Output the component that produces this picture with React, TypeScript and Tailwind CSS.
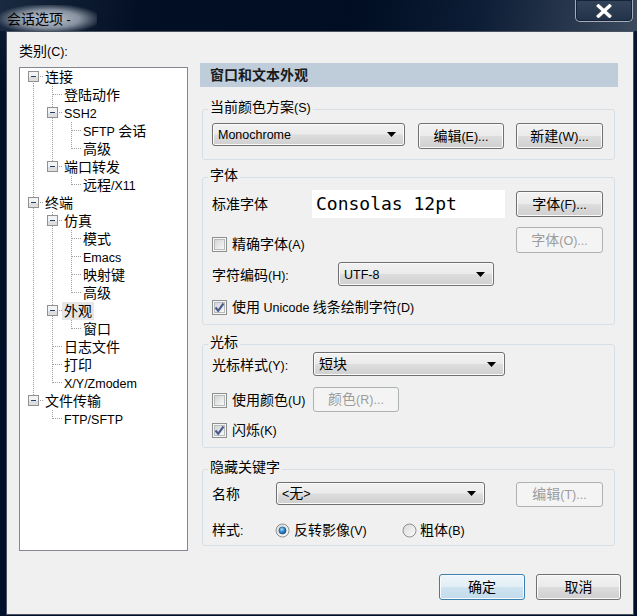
import React from 'react';

// split mixed text so CJK and Latin runs get their own sizes (Windows UI font mix)
const CJK_RUN = /([\u2E80-\u9FFF\uFF00-\uFFEF]+)/;
const IS_CJK = /[\u2E80-\u9FFF\uFF00-\uFFEF]/;

const T: React.FC<{ s: string }> = ({ s }) => (
  <span className="whitespace-nowrap">
    {s
      .split(CJK_RUN)
      .filter(Boolean)
      .map((p, i) => (
        <span key={i} className={IS_CJK.test(p) ? 'text-[14px]' : 'text-[12.5px]'}>
          {p}
        </span>
      ))}
  </span>
);

type Node = { l: number; t: string; exp?: boolean; sel?: boolean };

const tree: Node[] = [
  { l: 0, t: '连接', exp: true },
  { l: 1, t: '登陆动作' },
  { l: 1, t: 'SSH2', exp: true },
  { l: 2, t: 'SFTP 会话' },
  { l: 2, t: '高级' },
  { l: 1, t: '端口转发', exp: true },
  { l: 2, t: '远程/X11' },
  { l: 0, t: '终端', exp: true },
  { l: 1, t: '仿真', exp: true },
  { l: 2, t: '模式' },
  { l: 2, t: 'Emacs' },
  { l: 2, t: '映射键' },
  { l: 2, t: '高级' },
  { l: 1, t: '外观', exp: true, sel: true },
  { l: 2, t: '窗口' },
  { l: 1, t: '日志文件' },
  { l: 1, t: '打印' },
  { l: 1, t: 'X/Y/Zmodem' },
  { l: 0, t: '文件传输', exp: true },
  { l: 1, t: 'FTP/SFTP' },
];

// does the node at level k (self or ancestor of row i) have a later sibling?
const hasNext = (i: number, k: number) => {
  for (let j = i + 1; j < tree.length; j++) {
    if (tree[j].l < k) return false;
    if (tree[j].l === k) return true;
  }
  return false;
};

const TreeRow: React.FC<{ i: number }> = ({ i }) => {
  const n = tree[i];
  const L = n.l;
  const x = 19 * L + 9.5;
  const top = i === 0 ? 8.5 : 0;
  const bottom = hasNext(i, L) ? 18 : 8.5;
  return (
    <div className="flex h-[18px] items-center">
      <svg width={19 * (L + 1)} height={18} className="shrink-0" shapeRendering="crispEdges">
        <g stroke="#a0a0a0" strokeDasharray="1 1">
          {Array.from({ length: L }).map((_, k) =>
            hasNext(i, k) ? <line key={k} x1={19 * k + 9.5} y1={0} x2={19 * k + 9.5} y2={18} /> : null
          )}
          {top !== bottom && <line x1={x} y1={top} x2={x} y2={bottom} />}
          <line x1={x} y1={8.5} x2={19 * L + 19} y2={8.5} />
        </g>
        {n.exp && (
          <g>
            <rect x={19 * L + 4.5} y={3.5} width={10} height={10} fill="#f3f3f3" stroke="#919191" />
            <rect x={19 * L + 5} y={9} width={9} height={4} fill="#dedede" />
            <line x1={19 * L + 7} y1={8.5} x2={19 * L + 12} y2={8.5} stroke="#21406e" />
          </g>
        )}
      </svg>
      <span className={`block h-[18px] px-[2px] leading-[18px] whitespace-nowrap ${n.sel ? 'bg-[#e6e6e6]' : ''}`}>
        <T s={n.t} />
      </span>
    </div>
  );
};

const Check: React.FC<{ on?: boolean }> = ({ on }) => (
  <svg width="15" height="15" viewBox="0 0 15 15" className="shrink-0" shapeRendering="crispEdges">
    <defs>
      <linearGradient id="cbg" x1="0" y1="0" x2="1" y2="1">
        <stop offset="0" stopColor="#d2d2d2" />
        <stop offset="1" stopColor="#fafafa" />
      </linearGradient>
    </defs>
    <rect x="0.5" y="0.5" width="14" height="14" fill="#f6f6f6" stroke="#8e8f8f" />
    <rect x="2.5" y="2.5" width="10" height="10" fill="url(#cbg)" stroke="#b9bcbf" />
    {on && (
      <path d="M3.5 7.5 L6.2 10.8 L11.5 3.5" fill="none" stroke="#4a5e8c" strokeWidth="2.2" shapeRendering="auto" />
    )}
  </svg>
);

const Radio: React.FC<{ on?: boolean }> = ({ on }) => (
  <svg width="15" height="15" viewBox="0 0 15 15" className="shrink-0">
    <defs>
      <linearGradient id="rbg" x1="0" y1="0" x2="1" y2="1">
        <stop offset="0" stopColor="#d6d6d6" />
        <stop offset="1" stopColor="#ffffff" />
      </linearGradient>
      <radialGradient id="rdot" cx="0.4" cy="0.35" r="0.7">
        <stop offset="0" stopColor="#b4e2fb" />
        <stop offset="0.45" stopColor="#3a8ed2" />
        <stop offset="1" stopColor="#0f4d8e" />
      </radialGradient>
    </defs>
    <circle cx="7.5" cy="7.5" r="6.5" fill="url(#rbg)" stroke="#8e8f8f" />
    {on && <circle cx="7.5" cy="7.5" r="3.6" fill="url(#rdot)" stroke="#174e85" strokeWidth="0.6" />}
  </svg>
);

const Btn: React.FC<{ label: string; className: string; disabled?: boolean; primary?: boolean }> = ({
  label,
  className,
  disabled,
  primary,
}) => (
  <div
    className={`flex shrink-0 items-center justify-center rounded-[3px] border leading-[16px] ${className} ${
      disabled
        ? 'border-[#adb2b5] bg-[#f4f4f4] text-[#9c9c9c]'
        : primary
          ? 'border-[#3c7fb1] bg-[linear-gradient(to_bottom,#eef6fb_0%,#e2eef6_48%,#cfe3f0_52%,#c2dbec_100%)] shadow-[inset_0_0_0_1px_#f7fbfe]'
          : 'border-[#707070] bg-[linear-gradient(to_bottom,#f2f2f2_0%,#ebebeb_48%,#dddddd_52%,#cfcfcf_100%)] shadow-[inset_0_0_0_1px_#fbfbfb]'
    }`}
  >
    <T s={label} />
  </div>
);

const Combo: React.FC<{ value: string; className: string }> = ({ value, className }) => (
  <div
    className={`flex shrink-0 items-center rounded-[3px] border border-[#707070] bg-[linear-gradient(to_bottom,#f2f2f2_0%,#ebebeb_48%,#dddddd_52%,#cfcfcf_100%)] pl-[5px] leading-[16px] shadow-[inset_0_0_0_1px_#fbfbfb] ${className}`}
  >
    <T s={value} />
    <svg width="9" height="5" viewBox="0 0 9 5" className="ml-auto mr-[8px]">
      <path d="M0 0h9L4.5 5z" fill="#000" />
    </svg>
  </div>
);

const Group: React.FC<{ title: string; className: string; children: React.ReactNode }> = ({
  title,
  className,
  children,
}) => (
  <div className={`relative ml-[2px] w-[413px] rounded-[3px] border border-[#d5dfe5] pl-[9px] ${className}`}>
    <div className="absolute left-[5px] top-[-11px] bg-[#f0f0f0] px-[2px] leading-[16px]">
      <T s={title} />
    </div>
    {children}
  </div>
);

export default function App() {
  return (
    <div className="flex h-[616px] w-[637px] flex-col overflow-hidden bg-[linear-gradient(to_bottom,#0c1c33,#021026_15%,#00102a)] font-['Liberation_Sans','Noto_Sans_CJK_SC',sans-serif] text-black">
      {/* Title bar */}
      <div className="flex h-[31px] shrink-0 items-start justify-between bg-[linear-gradient(100deg,#1a2a40_0%,#030f24_22%,#000d22_55%,#0d1d35_75%,#3c4a5e_100%)]">
        <div className="mt-[5px] flex h-[28px] items-center pl-[7px] pr-[26px] bg-[radial-gradient(ellipse_at_center,rgba(200,207,218,0.95)_0%,rgba(175,184,197,0.75)_45%,rgba(100,112,130,0)_78%)]">
          <span className="leading-[18px]">
            <T s="会话选项 -" />
          </span>
        </div>
        <div className="mr-[4px] flex h-[22px] w-[58px] items-center justify-center rounded-b-[5px] border border-t-0 border-[#a3acb8] bg-[linear-gradient(to_bottom,#33435a,#223249)] shadow-[inset_0_0_0_1px_#16233a]">
          <svg width="16" height="14" viewBox="0 0 16 14">
            <path d="M2.5 2 L13.5 12 M13.5 2 L2.5 12" stroke="#3a4555" strokeWidth="5.2" strokeLinecap="square" />
            <path d="M2.5 2 L13.5 12 M13.5 2 L2.5 12" stroke="#ffffff" strokeWidth="3.4" strokeLinecap="square" />
          </svg>
        </div>
      </div>

      {/* Client area */}
      <div className="ml-[6px] flex h-[584px] w-[628px] flex-col border border-[#4a5260] bg-[#f0f0f0]">
        <div className="flex items-start gap-[12px] pl-[12px]">
          {/* Category tree */}
          <div className="w-[169px]">
            <div className="mt-[11px] h-[16px] leading-[16px]">
              <T s="类别(C):" />
            </div>
            <div className="mt-[8px] h-[484px] w-[169px] border border-[#828790] bg-white pl-[4px]">
              {tree.map((_, i) => (
                <TreeRow key={i} i={i} />
              ))}
            </div>
          </div>

          {/* Options panel */}
          <div className="mt-[31px] w-[418px]">
            <div className="flex h-[24px] items-center bg-[#bfcddb] pl-[10px] font-bold leading-[16px] text-[#1b1b1b]">
              <T s="窗口和文本外观" />
            </div>

            <Group title="当前颜色方案(S)" className="mt-[22px] h-[51px]">
              <div className="mt-[13px] flex items-start">
                <Combo value="Monochrome" className="h-[23px] w-[193px]" />
                <Btn label="编辑(E)..." className="ml-[13px] h-[26px] w-[86px]" />
                <Btn label="新建(W)..." className="ml-[12px] h-[26px] w-[87px]" />
              </div>
            </Group>

            <Group title="字体" className="mt-[17px] h-[148px]">
              <div className="mt-[12px] flex h-[28px] items-center">
                <div className="w-[100px] leading-[16px]">
                  <T s="标准字体" />
                </div>
                <div className="flex h-[28px] w-[193px] items-center bg-white pl-[4px] font-['DejaVu_Sans_Mono',monospace] text-[18px] leading-[20px]">
                  Consolas 12pt
                </div>
                <Btn label="字体(F)..." className="ml-[11px] h-[26px] w-[87px]" />
              </div>
              <div className="mt-[9px] flex h-[26px] w-[391px] items-start">
                <div className="mt-[9px] flex items-center gap-[5px] leading-[16px]">
                  <Check />
                  <T s="精确字体(A)" />
                </div>
                <Btn label="字体(O)..." className="ml-auto h-[26px] w-[87px]" disabled />
              </div>
              <div className="mt-[9px] flex items-center">
                <div className="w-[126px] pt-[3px] leading-[16px]">
                  <T s="字符编码(H):" />
                </div>
                <Combo value="UTF-8" className="h-[24px] w-[156px]" />
              </div>
              <div className="mt-[13px] flex h-[16px] items-center gap-[5px] leading-[16px]">
                <Check on />
                <T s="使用 Unicode 线条绘制字符(D)" />
              </div>
            </Group>

            <Group title="光标" className="mt-[19px] h-[104px]">
              <div className="mt-[7px] flex items-center">
                <div className="w-[101px] pt-[2px] leading-[16px]">
                  <T s="光标样式(Y):" />
                </div>
                <Combo value="短块" className="h-[24px] w-[192px]" />
              </div>
              <div className="mt-[11px] flex items-center">
                <div className="flex w-[99px] items-center gap-[5px] overflow-hidden whitespace-nowrap pt-[2px] leading-[16px]">
                  <Check />
                  <T s="使用颜色(U)" />
                </div>
                <Btn label="颜色(R)..." className="ml-[2px] h-[25px] w-[86px]" disabled />
              </div>
              <div className="mt-[10px] flex h-[16px] items-center gap-[5px] leading-[16px]">
                <Check on />
                <T s="闪烁(K)" />
              </div>
            </Group>

            <Group title="隐藏关键字" className="mt-[21px] h-[77px]">
              <div className="mt-[12px] flex items-start">
                <div className="w-[64px] pt-[4px] leading-[16px]">
                  <T s="名称" />
                </div>
                <Combo value="<无>" className="h-[23px] w-[209px]" />
                <Btn label="编辑(T)..." className="ml-[31px] h-[25px] w-[87px]" disabled />
              </div>
              <div className="mt-[15px] flex h-[16px] items-center leading-[16px]">
                <div className="w-[63px]">
                  <T s="样式:" />
                </div>
                <div className="flex w-[127px] items-center gap-[4px]">
                  <Radio on />
                  <T s="反转影像(V)" />
                </div>
                <div className="flex items-center gap-[3px]">
                  <Radio />
                  <T s="粗体(B)" />
                </div>
              </div>
            </Group>
          </div>
        </div>

        {/* Dialog buttons */}
        <div className="mt-[23px] flex justify-end gap-[11px] pr-[12px]">
          <Btn label="确定" className="h-[26px] w-[86px]" primary />
          <Btn label="取消" className="h-[26px] w-[85px]" />
        </div>
      </div>
    </div>
  );
}
